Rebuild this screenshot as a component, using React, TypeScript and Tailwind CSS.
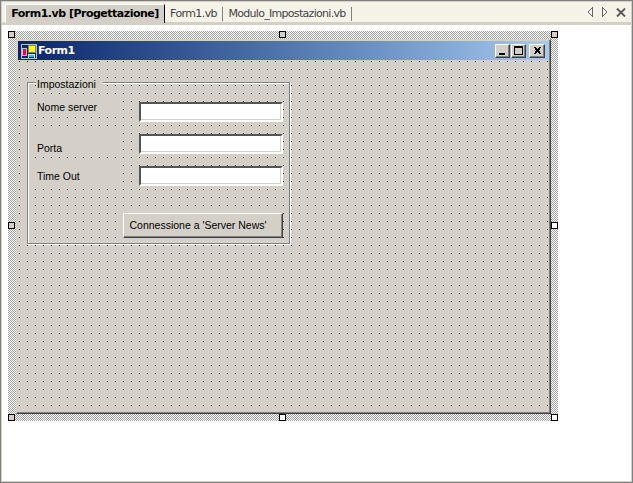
const dots =
  'bg-[#d4d0c8] bg-[conic-gradient(from_270deg_at_1px_1px,#000_90deg,transparent_0)] bg-[length:8px_8px] bg-[position:2px_5px]';
const raised =
  'border border-t-white border-l-white border-r-[#404040] border-b-[#404040] shadow-[inset_-1px_-1px_0_#808080]';

// selection grips, left/top relative to the hatched frame
const handles = [
  { className: 'left-0 top-0', filled: true },
  { className: 'left-[271px] top-0', filled: true },
  { className: 'left-[543px] top-0', filled: true },
  { className: 'left-0 top-[191px]', filled: true },
  { className: 'left-[543px] top-[191px]', filled: false },
  { className: 'left-0 top-[383px]', filled: true },
  { className: 'left-[271px] top-[383px]', filled: false },
  { className: 'left-[543px] top-[383px]', filled: false },
];

const fields = [
  { label: 'Nome server', labelBox: 'top-[14px] h-[20px] pt-[4px]', boxTop: 'top-[19px]' },
  { label: 'Porta', labelBox: 'top-[44px] h-[29px] pt-[15px]', boxTop: 'top-[51px]' },
  { label: 'Time Out', labelBox: 'top-[77px] h-[26px] pt-[10px]', boxTop: 'top-[83px]' },
];

function FormIcon() {
  return (
    <svg width="16" height="15" viewBox="0 0 16 15" shapeRendering="crispEdges" className="mt-[1px] shrink-0">
      <rect x="0" y="0" width="16" height="15" fill="#b8c0d0" />
      <rect x="1" y="1" width="14" height="13" fill="#0a246a" />
      <rect x="7" y="1" width="8" height="8" fill="#808080" />
      <rect x="8" y="2" width="6" height="6" fill="#ffff00" />
      <rect x="1" y="4" width="5" height="8" fill="#b8c0d0" />
      <rect x="2" y="5" width="3" height="6" fill="#ff0040" />
      <rect x="7" y="10" width="7" height="4" fill="#e0e0e0" />
      <rect x="8" y="11" width="5" height="2" fill="#00d0ff" />
      <rect x="8" y="13" width="5" height="1" fill="#0000ff" />
    </svg>
  );
}

function CaptionButton({ children, className = '' }: { children: React.ReactNode; className?: string }) {
  return (
    <div className={`flex h-[14px] items-center justify-center bg-[#d4d0c8] ${raised} ${className}`}>
      <svg width="11" height="10" viewBox="0 0 11 10" shapeRendering="crispEdges">
        {children}
      </svg>
    </div>
  );
}

export default function App() {
  return (
    <div className="flex h-[483px] w-[633px] flex-col border border-[#808080] bg-white p-[1px] shadow-[inset_0_0_0_1px_#d4d0c8] [font-family:'Liberation_Sans',sans-serif] text-[10.5px] text-black">
      {/* tab strip */}
      <div className="flex h-[23px] shrink-0 items-start border-b-[3px] border-[#d4d0c8] bg-[#f5f2e8] [font-family:'DejaVu_Sans',sans-serif]">
        <div className="ml-[3px] mt-[2px] flex h-[19px] w-[160px] items-center justify-center border-l border-t border-r border-l-white border-t-white border-r-black bg-[#d4d0c8] text-[11px] font-bold tracking-[-0.5px]">
          Form1.vb [Progettazione]
        </div>
        <div className="mt-[5px] flex h-[14px] w-[58px] items-center justify-center border-r border-[#808080] text-[11px] tracking-[-0.6px] text-[#444]">
          Form1.vb
        </div>
        <div className="mt-[5px] flex h-[14px] w-[129px] items-center justify-center border-r border-[#808080] text-[11px] tracking-[-0.7px] text-[#444]">
          Modulo_Impostazioni.vb
        </div>
        <div className="ml-auto mr-[5px] mt-[5px] flex items-center gap-[7px]">
          <svg width="7" height="10" viewBox="0 0 7 10" shapeRendering="crispEdges">
            <path d="M5.5.5v9M5.5.5 1 5l4.5 4.5" fill="none" stroke="#666" />
          </svg>
          <svg width="7" height="10" viewBox="0 0 7 10" shapeRendering="crispEdges">
            <path d="M1.500.5v9M1.500.5 6 5 1.500 9.500" fill="none" stroke="#666" />
          </svg>
          <svg width="10" height="9" viewBox="0 0 10 9" className="ml-[1px]">
            <path d="M1 .5l8 8M9 .5l-8 8" fill="none" stroke="#555" strokeWidth="1.800" />
          </svg>
        </div>
      </div>

      {/* designer surface */}
      <div className="flex-1 pl-[6px] pt-[6px]">
        <div className="relative h-[390px] w-[550px] bg-white bg-[conic-gradient(#a0a0a0_25%,#fff_0_50%,#a0a0a0_0_75%,#fff_0)] bg-[length:2px_2px] p-[8px]">
          {handles.map((h) => (
            <div
              key={h.className}
              className={`absolute h-[7px] w-[7px] border border-black ${h.filled ? 'bg-[#d4d0c8]' : 'bg-white'} ${h.className}`}
            />
          ))}

          {/* form */}
          <div className={`flex h-[375px] w-[535px] flex-col border-r border-b border-t border-l border-t-[#d4d0c8] border-l-[#d4d0c8] border-r-[#404040] border-b-[#404040] p-[1px] shadow-[inset_-1px_-1px_0_#808080] ${dots}`}>
            <div className="flex h-[19px] shrink-0 items-center bg-linear-to-r from-[#0a246a] to-[#a6caf0] pl-[3px] pr-[4px]">
              <FormIcon />
              <span className="ml-[1px] mt-[2px] text-[11px] font-bold text-white [font-family:'DejaVu_Sans',sans-serif] tracking-[-0.5px]">Form1</span>
              <div className="ml-auto mt-[1px] flex items-center">
                <CaptionButton className="w-[15px]">
                  <rect x="2" y="7" width="6" height="2" fill="#000" />
                </CaptionButton>
                <CaptionButton className="ml-[1px] w-[15px]">
                  <path d="M1 0h9v9H1zM2 2v6h7V2z" fill="#000" fillRule="evenodd" />
                </CaptionButton>
                <CaptionButton className="ml-[3px] w-[16px]">
                  <path d="M2 1h2l1 2h1l1-2h2L7 4.500 9 8H7L6 6H5L4 8H2l2-3.500z" fill="#000" />
                </CaptionButton>
              </div>
            </div>

            {/* form client area: controls sit at their designer coordinates */}
            <div className="relative flex-1">
              <div className="absolute left-[9px] top-[22px] h-[162px] w-[263px] border border-[#808080] shadow-[1px_1px_0_#fff,inset_1px_1px_0_#fff]">
                <span className="absolute -top-[5px] left-[8px] bg-[#d4d0c8] pl-[1px] pr-[7px] leading-[13px]">Impostazioni</span>
                {fields.map((f) => (
                  <div key={f.label}>
                    <span className={`absolute left-[5px] w-[90px] bg-[#d4d0c8] pl-[4px] leading-[13px] ${f.labelBox}`}>{f.label}</span>
                    <div className={`absolute left-[111px] h-[20px] w-[144px] border-2 border-t-[#555] border-l-[#555] border-r-white border-b-white bg-white shadow-[inset_-1px_-1px_0_#d4d0c8] ${f.boxTop}`} />
                  </div>
                ))}
                <div className={`absolute left-[95px] top-[130px] flex h-[25px] w-[160px] items-center justify-center bg-[#d4d0c8] pr-[10px] ${raised}`}>
                  Connessione a 'Server News'
                </div>
              </div>
            </div>
          </div>
        </div>
      </div>
    </div>
  );
}
